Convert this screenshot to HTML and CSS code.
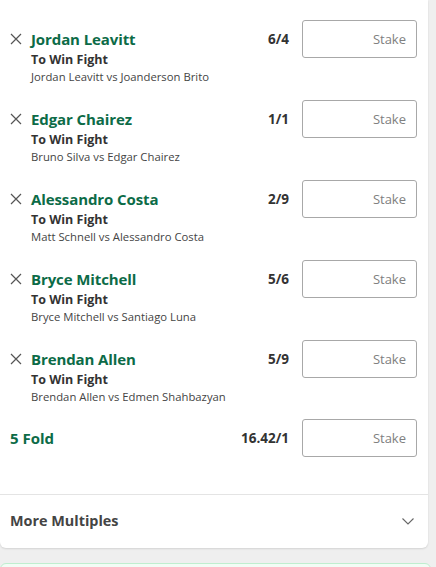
FILE: index.html
```html
<!DOCTYPE html>
<html>
<head>
<meta charset="utf-8">
<link rel="stylesheet" href="styles.css">
</head>
<body>
<div class="page">
  <div class="card">
    <div class="bets">
      <div class="bet">
        <div class="line">
          <span class="remove"><svg viewBox="0 0 12 12" width="12" height="12"><path d="M1 1L11 11M11 1L1 11" stroke="#555" stroke-width="1.2" fill="none"/></svg></span>
          <span class="name">Jordan Leavitt</span>
          <span class="odds">6/4</span>
          <div class="stake">Stake</div>
        </div>
        <div class="market">To Win Fight</div>
        <div class="event">Jordan Leavitt vs Joanderson Brito</div>
      </div>
      <div class="bet">
        <div class="line">
          <span class="remove"><svg viewBox="0 0 12 12" width="12" height="12"><path d="M1 1L11 11M11 1L1 11" stroke="#555" stroke-width="1.2" fill="none"/></svg></span>
          <span class="name">Edgar Chairez</span>
          <span class="odds">1/1</span>
          <div class="stake">Stake</div>
        </div>
        <div class="market">To Win Fight</div>
        <div class="event">Bruno Silva vs Edgar Chairez</div>
      </div>
      <div class="bet">
        <div class="line">
          <span class="remove"><svg viewBox="0 0 12 12" width="12" height="12"><path d="M1 1L11 11M11 1L1 11" stroke="#555" stroke-width="1.2" fill="none"/></svg></span>
          <span class="name">Alessandro Costa</span>
          <span class="odds">2/9</span>
          <div class="stake">Stake</div>
        </div>
        <div class="market">To Win Fight</div>
        <div class="event">Matt Schnell vs Alessandro Costa</div>
      </div>
      <div class="bet">
        <div class="line">
          <span class="remove"><svg viewBox="0 0 12 12" width="12" height="12"><path d="M1 1L11 11M11 1L1 11" stroke="#555" stroke-width="1.2" fill="none"/></svg></span>
          <span class="name">Bryce Mitchell</span>
          <span class="odds">5/6</span>
          <div class="stake">Stake</div>
        </div>
        <div class="market">To Win Fight</div>
        <div class="event">Bryce Mitchell vs Santiago Luna</div>
      </div>
      <div class="bet">
        <div class="line">
          <span class="remove"><svg viewBox="0 0 12 12" width="12" height="12"><path d="M1 1L11 11M11 1L1 11" stroke="#555" stroke-width="1.2" fill="none"/></svg></span>
          <span class="name">Brendan Allen</span>
          <span class="odds">5/9</span>
          <div class="stake">Stake</div>
        </div>
        <div class="market">To Win Fight</div>
        <div class="event">Brendan Allen vs Edmen Shahbazyan</div>
      </div>
      <div class="fold">
        <span class="fold-name">5 Fold</span>
        <span class="odds">16.42/1</span>
        <div class="stake">Stake</div>
      </div>
    </div>
    <div class="more">
      <span class="more-title">More Multiples</span>
      <svg class="chev" viewBox="0 0 12 7" width="12" height="7"><path d="M0.5 0.5L6 6L11.5 0.5" stroke="#666" stroke-width="1.1" fill="none"/></svg>
    </div>
  </div>
  <div class="next"></div>
</div>
</body>
</html>
```

FILE: styles.css
```css
* { box-sizing: border-box; }
html, body { margin: 0; padding: 0; }
body {
  background: #efefef;
  font-family: "Open Sans", "Noto Sans", sans-serif;
  color: #333;
  width: 436px;
  height: 567px;
  overflow: hidden;
}
.page { display: flex; flex-direction: column; }
.card {
  width: 428px;
  background: #fff;
  border-radius: 0 0 6px 6px;
  box-shadow: 0 1px 2px rgba(0,0,0,0.12);
}
.bets { padding: 20px 0 0 0; display: flex; flex-direction: column; }
.bet { height: 80px; }
.line {
  display: flex;
  align-items: center;
  height: 38px;
  padding-left: 10px;
}
.remove { width: 12px; height: 12px; display: flex; margin-right: 9px; }
.name {
  flex: 1;
  color: #0c6b47;
  font-weight: 700;
  font-size: 15px;
  letter-spacing: -0.1px;
}
.odds {
  font-weight: 700;
  font-size: 13.5px;
  color: #333;
  margin-right: 13px;
}
.stake {
  width: 115px;
  height: 38px;
  border: 1px solid #a8a8a8;
  border-radius: 3px;
  display: flex;
  align-items: center;
  justify-content: flex-end;
  padding-right: 10px;
  font-size: 13px;
  color: #808080;
  margin-right: 11px;
}
.market {
  padding-left: 31px;
  font-weight: 700;
  font-size: 12.5px;
  line-height: 18px;
  margin-top: -7px;
  color: #333;
}
.event {
  padding-left: 31px;
  font-size: 11.3px;
  line-height: 16px;
  color: #444;
}
.fold {
  display: flex;
  align-items: center;
  height: 38px;
  padding-left: 10px;
  margin-top: -1px;
}
.fold-name {
  flex: 1;
  color: #0c6b47;
  font-weight: 700;
  font-size: 15px;
}
.more {
  margin-top: 37px;
  border-top: 1px solid #e4e4e4;
  height: 54px;
  display: flex;
  align-items: center;
  padding: 0 14px 0 10px;
}
.more-title { flex: 1; font-weight: 700; font-size: 14.4px; color: #444; margin-top: -2px; }
.chev { display: block; }
.next {
  margin-top: 15px;
  height: 20px;
  width: 431px;
  background: #f2fcf5;
  border: 1px solid #bfeecf;
  border-radius: 6px;
}
```
